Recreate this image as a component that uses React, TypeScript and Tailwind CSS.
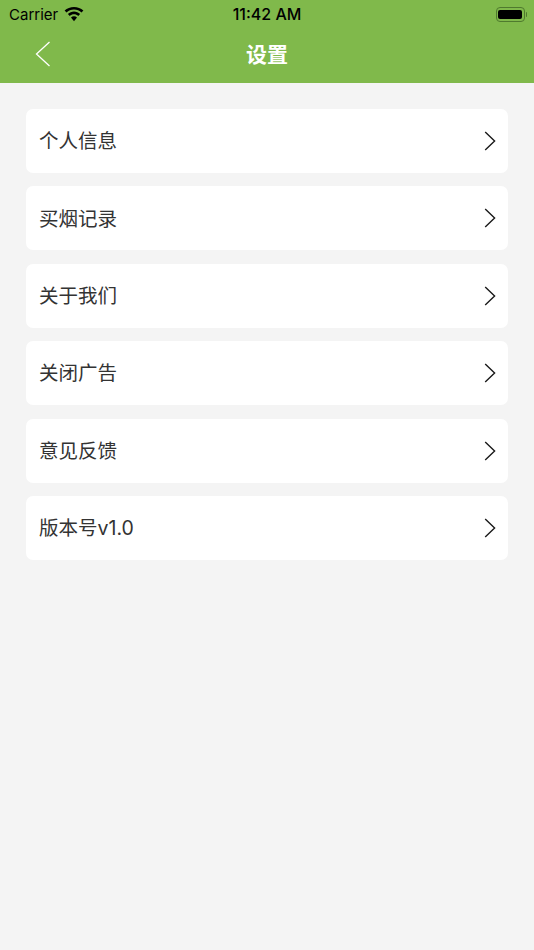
const items = ["个人信息", "买烟记录", "关于我们", "关闭广告", "意见反馈", "版本号v1.0"];

function Chevron() {
  return (
    <svg width="12" height="20" viewBox="0 0 12 20" fill="none" className="shrink-0">
      <path d="M1.2 1 L10.6 10 L1.2 19" stroke="#1a1a1a" strokeWidth="1.4" />
    </svg>
  );
}

function Wifi() {
  return (
    <svg width="20" height="15" viewBox="0 0 20 15" fill="#000">
      <path d="M10 2.600c2.900 0 5.500 1.100 7.500 3l1.900-2C16.900 1.200 13.600 0 10 0S3.100 1.200.600 3.600l1.900 2c2-1.900 4.600-3 7.500-3z" />
      <path d="M10 7.200c1.600 0 3.100.6 4.300 1.700l1.800-1.900C14.500 5.500 12.300 4.600 10 4.600S5.500 5.500 3.900 7l1.800 1.900C6.900 7.800 8.400 7.200 10 7.200z" />
      <path d="M10 9.200c-1.100 0-2.200.4-3 1.200l3 3.900 3-3.900c-.8-.8-1.900-1.200-3-1.200z" />
    </svg>
  );
}

function Battery() {
  return (
    <div className="flex items-center gap-[1px]">
      <div className="flex h-[15px] w-[29px] items-center justify-center rounded-[4px] border border-[#4f7a2e] p-[1px]">
        <div className="h-[9px] w-[24px] rounded-[2px] bg-black" />
      </div>
      <div className="h-[5px] w-[1.500px] rounded-r-sm bg-[#4f7a2e]" />
    </div>
  );
}

export default function App() {
  return (
    <div className="flex h-[950px] w-[534px] flex-col overflow-hidden bg-[#f4f4f4] font-['Inter','Noto_Sans_CJK_SC',sans-serif]">
      <header className="flex h-[83px] shrink-0 flex-col bg-[#80b94b]">
        <div className="relative flex h-[27px] items-center justify-between pl-[9px] pr-[7px] pt-[1px]">
          <div className="flex items-center gap-[6px]">
            <span className="text-[15px] leading-none text-black">Carrier</span>
            <Wifi />
          </div>
          <span className="absolute left-0 right-0 top-[6px] text-center text-[16px] font-medium leading-[16px] text-black">
            11:42 AM
          </span>
          <Battery />
        </div>
        <div className="relative flex flex-1 items-center justify-center pb-[2px]">
          <svg width="16" height="26" viewBox="0 0 16 26" fill="none" className="absolute left-[35px] top-[14px]">
            <path d="M14.500 1 L1.500 13 L14.500 25" stroke="#fff" strokeWidth="1.300" />
          </svg>
          <h1 className="text-[21px] font-bold leading-none text-white">设置</h1>
        </div>
      </header>
      <main className="flex flex-col gap-[13.400px] px-[26px] pt-[26px]">
        {items.map((t) => (
          <div key={t} className="flex h-[64px] items-center justify-between rounded-[7px] bg-white pl-[13px] pr-[12px]">
            <span className="pt-[2px] text-[19.500px] leading-none text-[#333]">{t}</span>
            <Chevron />
          </div>
        ))}
      </main>
    </div>
  );
}
